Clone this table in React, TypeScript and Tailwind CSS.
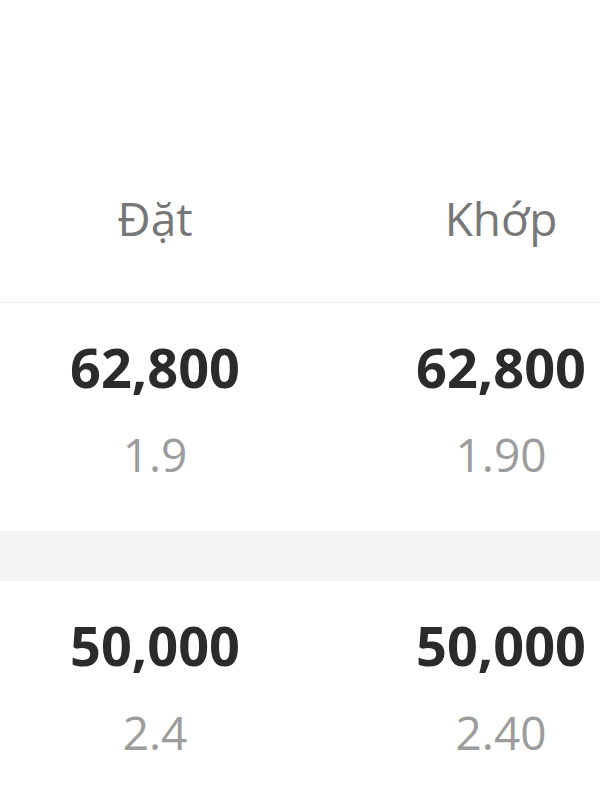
import React from "react";

const rows = [
  { a: "62,800", b: "1.9", c: "62,800", d: "1.90" },
  { a: "50,000", b: "2.4", c: "50,000", d: "2.40" },
];

function Cell({ top, bottom }: { top: string; bottom: string }) {
  return (
    <div className="flex flex-col items-center">
      <div className="text-[54px] leading-[64px] font-bold text-[#2b2b2b]">{top}</div>
      <div className="mt-[27px] text-[46px] leading-[56px] text-[#9c9c9c]">{bottom}</div>
    </div>
  );
}

export default function App() {
  return (
    <div
      className="w-[600px] h-[800px] bg-white overflow-hidden"
      style={{ fontFamily: '"Open Sans", "Noto Sans", sans-serif' }}
    >
      <div className="h-[303px] border-b border-[#ececec] pt-[190px]">
        <div className="grid grid-cols-[310px_92px_198px]">
          <div className="text-center text-[46px] leading-[56px] text-[#777777]">Đặt</div>
          <div />
          <div className="text-center text-[46px] leading-[56px] text-[#777777]">Khớp</div>
        </div>
      </div>
      <div className="pt-[32px] pb-[49px]">
        <div className="grid grid-cols-[310px_92px_198px]">
          <Cell top={rows[0].a} bottom={rows[0].b} />
          <div />
          <Cell top={rows[0].c} bottom={rows[0].d} />
        </div>
      </div>
      <div className="h-[50px] bg-[#f4f4f4]" />
      <div className="pt-[32px]">
        <div className="grid grid-cols-[310px_92px_198px]">
          <Cell top={rows[1].a} bottom={rows[1].b} />
          <div />
          <Cell top={rows[1].c} bottom={rows[1].d} />
        </div>
      </div>
    </div>
  );
}
